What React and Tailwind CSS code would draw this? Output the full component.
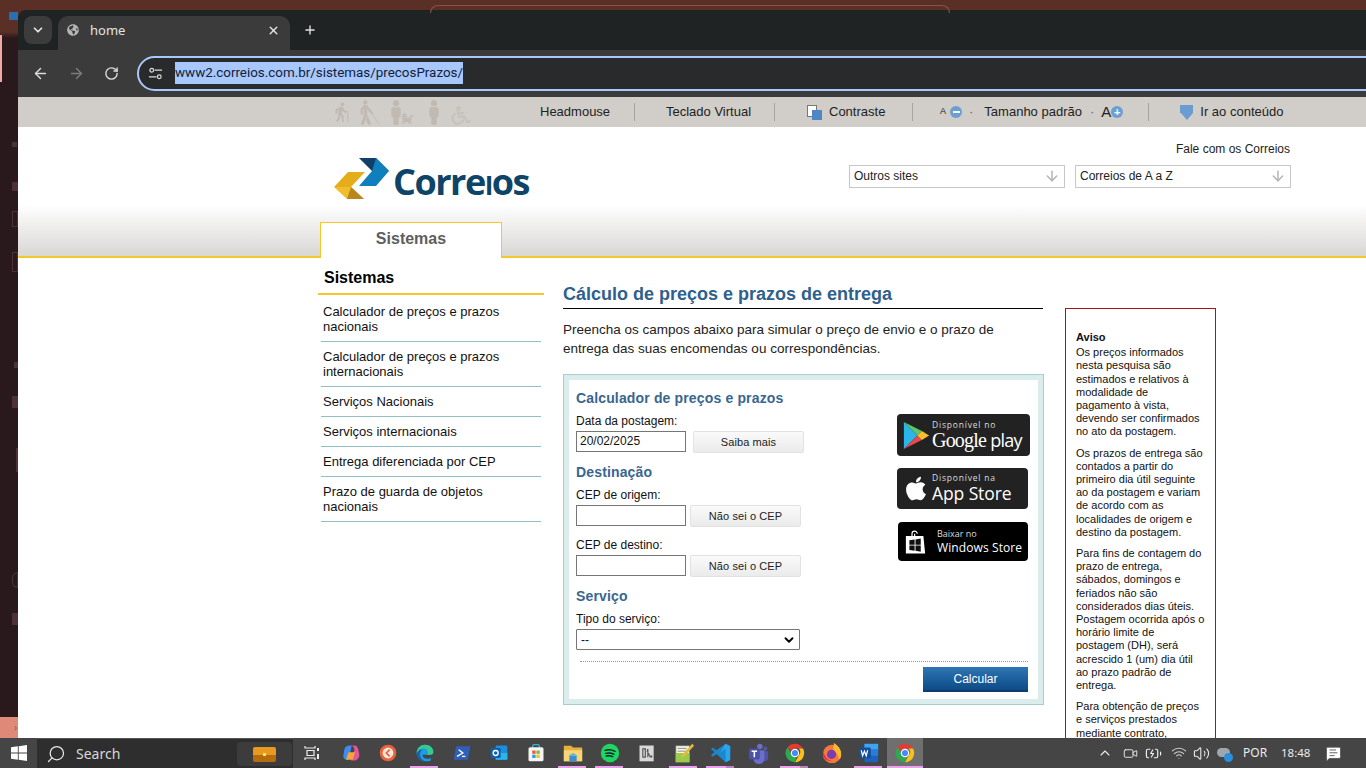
import React from "react";
import { FaApple, FaBlind, FaWheelchair, FaMale, FaBabyCarriage, FaGlobeAmericas } from "react-icons/fa";
import { MdElderly } from "react-icons/md";
import { ChevronDown, X, Plus, ArrowLeft, ArrowRight, RotateCw, Search, ChevronUp, Volume2, Wifi, MessageSquareText, Video, BatteryCharging, ArrowDown } from "lucide-react";

const Chrome = () => (
  <svg viewBox="0 0 24 24" className="w-[20px] h-[20px]">
    <path d="M12 1a11 11 0 0 1 9.6 5.6H12a5.4 5.4 0 0 0-5 3.4L3.2 5A11 11 0 0 1 12 1z" fill="#e33b2e" />
    <path d="M21.6 6.6A11 11 0 0 1 12 23l4.7-8.2a5.4 5.4 0 0 0-.4-8.2z" fill="#fbc116" />
    <path d="M12 23A11 11 0 0 1 3.2 5L8 13.6a5.4 5.4 0 0 0 6 3.6z" fill="#2da94f" />
    <circle cx="12" cy="12" r="4.4" fill="#4a8af4" stroke="#fff" strokeWidth="1.4" />
  </svg>
);

const apps = [
  { k: "copilot", u: 0, i: (
    <svg viewBox="0 0 24 24" className="w-[20px] h-[20px]">
      <path d="M4 8c1-4 4-5 7-5h2L9 20H7c-3 0-5-3-4-6z" fill="#3f8cf0" />
      <path d="M13 3h3c3 0 4 2 5 6l1 5c0 4-3 7-6 7h-4l4-12c.5-2-1-5-3-6z" fill="#e2569c" />
      <path d="M9 11h8l-3 9H6z" fill="#f5a53c" />
    </svg>) },
  { k: "clock", i: (
    <svg viewBox="0 0 24 24" className="w-[20px] h-[20px]">
      <circle cx="12" cy="12" r="10" fill="#e8623c" />
      <circle cx="12" cy="12" r="6.5" fill="#f7e6dc" />
      <path d="M14 8l-4 4 4 4" stroke="#e8623c" strokeWidth="2" fill="none" />
    </svg>) },
  { k: "edge", u: 1, i: (
    <svg viewBox="0 0 24 24" className="w-[20px] h-[20px]">
      <path d="M2 12C2 6 7 2 12 2c6 0 10 4 10 9 0 2-2 3-4 3H9c0 3 3 5 6 5 2 0 3-.4 4-1v3c-2 1-4 1-6 1C7 22 2 18 2 12z" fill="#1b9de2" />
      <path d="M2 12c1-3 4-5 7-4-2 1-3 3-3 6 0 3 2 6 6 8C6 22 2 18 2 12z" fill="#1e5fb0" />
      <path d="M12 2c6 0 10 4 10 9 0 2-2 3-4 3h-4c2-1 2-3 1-5-1-2-4-3-6-2-3 0-5 2-7 5 0-6 5-10 10-10z" fill="#37c98f" />
    </svg>) },
  { k: "ps", i: (
    <svg viewBox="0 0 24 24" className="w-[20px] h-[20px]">
      <path d="M5 4h17l-3 16H2z" fill="#2f5fb8" />
      <path d="M8 8l5 4-7 4M12 16h4" stroke="#fff" strokeWidth="1.6" fill="none" />
    </svg>) },
  { k: "outlook", i: (
    <svg viewBox="0 0 24 24" className="w-[20px] h-[20px]">
      <rect x="8" y="3" width="14" height="17" rx="1.5" fill="#1c8fdc" />
      <path d="M8 12h14v8H8z" fill="#2cb5ea" />
      <rect x="2" y="6" width="12" height="12" rx="1.5" fill="#0f5fae" />
      <circle cx="8" cy="12" r="3" fill="none" stroke="#fff" strokeWidth="1.6" />
    </svg>) },
  { k: "store", i: (
    <svg viewBox="0 0 24 24" className="w-[20px] h-[20px]">
      <path d="M8 6V4a2 2 0 0 1 2-2h4a2 2 0 0 1 2 2v2" stroke="#35b7d5" strokeWidth="1.6" fill="none" />
      <rect x="3" y="5" width="18" height="17" rx="2" fill="#f4f4f4" />
      <rect x="7.5" y="9" width="4" height="4" fill="#ef5b3a" />
      <rect x="12.5" y="9" width="4" height="4" fill="#7bbc3a" />
      <rect x="7.5" y="14" width="4" height="4" fill="#2a9fe0" />
      <rect x="12.5" y="14" width="4" height="4" fill="#f8b92b" />
    </svg>) },
  { k: "folder", u: 1, i: (
    <svg viewBox="0 0 24 24" className="w-[22px] h-[22px]">
      <path d="M2 4h8l2 2h10v15H2z" fill="#e6b13c" />
      <path d="M2 9h20v12H2z" fill="#f8d675" />
      <path d="M8 21v-6h8v6z" fill="#3b8fd4" />
      <path d="M7 15l5-3 5 3z" fill="#5eaee6" />
    </svg>) },
  { k: "spotify", u: 1, i: (
    <svg viewBox="0 0 24 24" className="w-[20px] h-[20px]">
      <circle cx="12" cy="12" r="11" fill="#1ed760" />
      <path d="M6 8.8c4-1 8.5-.7 12 1.2M6.8 12.4c3.5-.8 7-.5 10 1.1M7.5 15.6c3-.6 5.6-.4 8 .9" stroke="#123" strokeWidth="1.7" fill="none" strokeLinecap="round" />
    </svg>) },
  { k: "notion", i: (
    <svg viewBox="0 0 24 24" className="w-[20px] h-[20px]">
      <rect x="3" y="3" width="17" height="19" fill="#d8d8d8" />
      <path d="M7 7h3v10H7zM12 9l4 8M12 8h1v9" stroke="#555" strokeWidth="1.4" fill="none" />
      <rect x="16" y="15" width="2.4" height="2.4" fill="#555" />
    </svg>) },
  { k: "notepad", u: 1, i: (
    <svg viewBox="0 0 24 24" className="w-[22px] h-[22px]">
      <path d="M3 4h15v18H3z" fill="#f6f6e2" stroke="#666" strokeWidth=".8" />
      <path d="M3 12h15v10H3z" fill="#9ccb4a" />
      <path d="M5 7h10M5 10h10" stroke="#888" strokeWidth="1" />
      <path d="M21 2l2 2-11 12-3 1 1-3z" fill="#e5b93c" />
    </svg>) },
  { k: "vscode", u: 2, i: (
    <svg viewBox="0 0 24 24" className="w-[22px] h-[22px]">
      <path d="M17 2l5 2.5v15L17 22 7 13l-4 3-2-1.500 4-3.500-4-3.500L3 6l4 3z" fill="#1a87cf" />
      <path d="M17 2l5 2.500v15L17 22V7l-6 5z" fill="#2aa7ec" />
    </svg>) },
  { k: "teams", i: (
    <svg viewBox="0 0 24 24" className="w-[22px] h-[22px]">
      <circle cx="14" cy="5" r="3" fill="#6b6fc9" />
      <circle cx="20" cy="7" r="2.200" fill="#5059a8" />
      <path d="M15 10h8v7a4 4 0 0 1-8 0z" fill="#4f55a6" />
      <path d="M7 9h12v9a6 6 0 0 1-12 0z" fill="#6b6fc9" />
      <rect x="2" y="7" width="12" height="12" rx="1.500" fill="#4b50a8" />
      <path d="M5 10h6M8 10v6.500" stroke="#fff" strokeWidth="1.700" />
    </svg>) },
  { k: "chrome", u: 2, i: <Chrome /> },
  { k: "firefox", i: (
    <svg viewBox="0 0 24 24" className="w-[22px] h-[22px]">
      <circle cx="12" cy="13" r="10" fill="#f5793a" />
      <path d="M14 1c5 3 8 7 8 12 0 3-1 5-2 6-1-5-4-8-7-11 1-3 1-5 1-7z" fill="#fbb92e" />
      <circle cx="11.500" cy="13.500" r="5" fill="#7c3bb0" />
      <path d="M3 11c1 6 5 9 9 10-5 0-10-3-10-8z" fill="#e8304a" />
    </svg>) },
  { k: "word", u: 1, i: (
    <svg viewBox="0 0 24 24" className="w-[22px] h-[22px]">
      <rect x="7" y="2" width="15" height="20" rx="1.500" fill="#1f62bd" />
      <rect x="7" y="8" width="15" height="7" fill="#2b7cd3" />
      <rect x="7" y="2" width="15" height="6" fill="#41a5ee" />
      <rect x="1" y="6" width="13" height="12" rx="1.500" fill="#134f9c" />
      <path d="M3.500 9l1.500 6 2-5 2 5 1.500-6" stroke="#fff" strokeWidth="1.300" fill="none" />
    </svg>) },
];

const GooglePlayMark = () => (
  <svg viewBox="0 0 30 32" className="w-[27px] h-[29px] shrink-0">
    <path d="M1 1l15 15L1 31z" fill="#2bb5e8" />
    <path d="M1 1l20 10-5 5z" fill="#5cc66b" />
    <path d="M1 31l20-10-5-5z" fill="#e8484e" />
    <path d="M21 11l8 5-8 5-5-5z" fill="#f5c02c" />
  </svg>
);

const WinStoreMark = () => (
  <svg viewBox="0 0 24 28" className="w-[21px] h-[26px] shrink-0">
    <path d="M8 7V4.500a3 3 0 0 1 6 0M11 4.500V7" stroke="#fff" strokeWidth="1.300" fill="none" />
    <path d="M1 7h20l2 20H1z" fill="#fff" />
    <path d="M5 12l6-1v6H5zM12 11l6-1v7h-6zM5 18h6v6l-6-1zM12 18h6v7l-6-1z" fill="#111" />
  </svg>
);

function GrayBar() {
  const Sep = () => <span className="block w-px h-[18px] bg-[#a8a49f]" />;
  return (
    <div className="h-[30px] bg-[#d1cdc9] flex items-center pl-[312px] text-[13px] text-[#222] shrink-0 font-['Liberation_Sans',sans-serif]">
      <div className="flex items-end text-[#c0bab3] w-[210px] h-[26px]">
        <MdElderly className="w-[22px] h-[26px]" />
        <FaBlind className="w-[20px] h-[25px] ml-[8px]" />
        <FaMale className="w-[14px] h-[25px] ml-[9px]" />
        <FaBabyCarriage className="w-[11px] h-[13px] -ml-[1px]" />
        <FaMale className="w-[16px] h-[25px] ml-[13px]" />
        <FaWheelchair className="w-[20px] h-[19px] ml-[9px] text-[#c8c2bb]" />
      </div>
      <span className="w-[94px]">Headmouse</span>
      <Sep />
      <span className="ml-[31px] w-[108px]">Teclado Virtual</span>
      <Sep />
      <span className="ml-[32px] w-[15px] h-[15px] relative shrink-0">
        <span className="absolute left-0 top-0 w-[10px] h-[12px] bg-white border border-[#777]" />
        <span className="absolute right-0 bottom-0 w-[10px] h-[10px] bg-[#4f86c6]" />
      </span>
      <span className="ml-[7px] w-[83px]">Contraste</span>
      <Sep />
      <span className="ml-[27px] text-[9px]">A</span>
      <span className="ml-[4px] w-[12px] h-[12px] rounded-full bg-[#6b9fd4] flex items-center justify-center"><span className="w-[7px] h-[2px] bg-white" /></span>
      <span className="ml-[7px] text-[#666]">·</span>
      <span className="ml-[11px]">Tamanho padrão</span>
      <span className="ml-[8px] text-[#666]">·</span>
      <span className="ml-[7px] text-[15px]">A</span>
      <span className="w-[12px] h-[12px] rounded-full bg-[#6b9fd4] flex items-center justify-center text-white text-[11px] font-bold leading-none">+</span>
      <span className="ml-[25px]"><Sep /></span>
      <span className="ml-[31px] w-[13px] h-[15px] flex flex-col items-center shrink-0">
        <span className="w-[13px] h-[8px] bg-[#6a9bd1]" />
        <span className="w-0 h-0 border-l-[6.5px] border-r-[6.5px] border-t-[7px] border-l-transparent border-r-transparent border-t-[#6a9bd1]" />
      </span>
      <span className="ml-[7px]">Ir ao conteúdo</span>
    </div>
  );
}

function Logo() {
  return (
    <div className="flex items-center ml-[14px] mt-[30px] h-[43px]">
      <svg viewBox="0 0 56 42" className="w-[56px] h-[42px] shrink-0">
        <path d="M0 29L14 14H31L17 29z" fill="#e6ad1a" />
        <path d="M0 29L17 29L30 41H13z" fill="#f0bd2c" />
        <path d="M17 29L30 41H13z" fill="#b8851e" />
        <path d="M25 0H42L55 13L38 13z" fill="#123f68" />
        <path d="M42 0L55 13L42 28H25L38 13z" fill="#0f7fbe" />
      </svg>
      <span className="ml-[3px] mt-[7px] font-['Open_Sans',sans-serif] text-[36px] leading-none font-bold text-[#0d4468] tracking-[-1.5px]">
        Corre<span className="uppercase text-[26px] font-bold">i</span>os
      </span>
    </div>
  );
}

function Dropdown({ label }) {
  return (
    <div className="w-[216px] h-[23px] border border-[#c6c6c6] bg-white flex items-center justify-between pl-[4px] pr-[4px] pb-[1px] text-[12px] text-[#222]">
      <span>{label}</span>
      <ArrowDown className="w-[16px] h-[16px] text-[#b3b3b3]" strokeWidth={2.2} />
    </div>
  );
}

function Header() {
  return (
    <div className="h-[131px] shrink-0 border-b-2 border-[#f4c82c] bg-[linear-gradient(#ffffff_0,#ffffff_60%,#d9d7d4_100%)] pl-[302px] pr-[75px] flex flex-col">
      <div className="flex h-[95px] shrink-0">
        <Logo />
        <div className="ml-auto flex flex-col items-end pt-[14px] text-[12px] text-[#222]">
          <span className="leading-[16px] mr-px">Fale com os Correios</span>
          <div className="flex gap-[10px] mt-[8px]">
            <Dropdown label="Outros sites" />
            <Dropdown label="Correios de A a Z" />
          </div>
        </div>
      </div>
      <div className="w-[182px] h-[36px] shrink-0 bg-white border border-b-0 border-[#f4c82c] flex items-center justify-center text-[16px] font-bold text-[#5e5e5e] pb-[4px]">
        Sistemas
      </div>
    </div>
  );
}

const menu = [
  ["Calculador de preços e prazos nacionais", 45],
  ["Calculador de preços e prazos internacionais", 45],
  ["Serviços Nacionais", 30],
  ["Serviços internacionais", 30],
  ["Entrega diferenciada por CEP", 30],
  ["Prazo de guarda de objetos nacionais", 45],
];

function Sidebar() {
  return (
    <div className="w-[226px] shrink-0 pt-[10px] ml-[-2px]">
      <div className="text-[16px] font-bold text-black leading-[20px] pl-[6px] pb-[5px] border-b-2 border-[#f4c82c]">Sistemas</div>
      <div className="ml-[3px] w-[220px] mt-[2px]">
        {menu.map(([t, h]) => (
          <div key={t} className="border-b border-[#8fc0c4] flex items-center pl-[2px] pr-[30px] text-[13px] leading-[15px] text-[#111]" style={{ height: h }}>
            <span>{t}</span>
          </div>
        ))}
      </div>
    </div>
  );
}

const Btn = ({ children, w }) => (
  <button className={`${w} h-[22px] rounded-[2px] border border-[#e2e2e2] bg-[linear-gradient(#fafafa,#ebebeb)] text-[11px] tracking-[0.1px] text-[#222] flex items-center justify-center`}>{children}</button>
);

const H3 = ({ children, className = "" }) => (
  <div className={`text-[14px] font-bold tracking-[0.15px] text-[#3a6590] leading-[18px] ${className}`}>{children}</div>
);

const Lbl = ({ children, className = "" }) => (
  <div className={`text-[12px] text-[#111] leading-[14px] ${className}`}>{children}</div>
);

const Inp = ({ value = "" }) => (
  <div className="w-[110px] h-[21px] border border-[#767676] bg-white text-[12px] text-[#111] pl-[3px] leading-[18px]">{value}</div>
);

function Badges() {
  return (
    <div className="flex flex-col w-[135px] ml-auto mt-[25px] mr-[-3px] text-white font-['Open_Sans',sans-serif]">
      <div className="w-[133px] h-[42px] ml-[1px] bg-[#222] rounded-[4px] flex items-center pl-[6px]">
        <GooglePlayMark />
        <div className="ml-[2px] flex flex-col leading-none">
          <span className="text-[8.5px] tracking-[0.8px] leading-[10px] text-[#ddd]">Disponível no</span>
          <span className="text-[20px] leading-[20px] tracking-[-0.8px] font-['Liberation_Serif',serif] whitespace-nowrap">Google <span className="font-['Open_Sans',sans-serif] text-[18px]">play</span></span>
        </div>
      </div>
      <div className="w-[131px] h-[41px] ml-[1px] mt-[12px] bg-[#222] rounded-[4px] flex items-center pl-[7px]">
        <FaApple className="w-[24px] h-[27px] shrink-0" />
        <div className="ml-[4px] flex flex-col">
          <span className="text-[8.5px] tracking-[0.8px] leading-[10px] text-[#ddd]">Disponível na</span>
          <span className="text-[17.5px] leading-[21px] tracking-[-0.1px]">App Store</span>
        </div>
      </div>
      <div className="w-[130px] h-[39px] ml-[2px] mt-[13px] bg-black rounded-[4px] flex items-center pl-[7px]">
        <WinStoreMark />
        <div className="ml-[11px] flex flex-col">
          <span className="text-[9px] leading-[12px] text-[#ddd]">Baixar no</span>
          <span className="text-[12px] leading-[15px] tracking-[0.1px]">Windows Store</span>
        </div>
      </div>
    </div>
  );
}

function Calc() {
  return (
    <div className="mt-[16px] w-[481px] h-[331px] border border-[#a9cccc] bg-[#dbecec] p-[5px]">
      <div className="bg-white h-full pl-[7px] pr-[10px] pt-[9px]">
        <div className="flex">
          <div className="w-[228px] shrink-0">
            <H3>Calculador de preços e prazos</H3>
            <Lbl className="mt-[7px]">Data da postagem:</Lbl>
            <div className="flex gap-[7px] mt-[3px]">
              <Inp value="20/02/2025" />
              <Btn w="w-[111px]">Saiba mais</Btn>
            </div>
            <H3 className="mt-[10px]">Destinação</H3>
            <Lbl className="mt-[7px]">CEP de origem:</Lbl>
            <div className="flex gap-[4px] mt-[3px]">
              <Inp />
              <Btn w="w-[111px]">Não sei o CEP</Btn>
            </div>
            <Lbl className="mt-[11px]">CEP de destino:</Lbl>
            <div className="flex gap-[4px] mt-[3px]">
              <Inp />
              <Btn w="w-[111px]">Não sei o CEP</Btn>
            </div>
            <H3 className="mt-[10px]">Serviço</H3>
            <Lbl className="mt-[7px]">Tipo do serviço:</Lbl>
            <div className="w-[224px] h-[21px] mt-[3px] border border-[#767676] rounded-[1px] bg-white flex items-center justify-between pl-[4px] pr-[3px] text-[12px] text-[#111]">
              <span>--</span>
              <ChevronDown className="w-[14px] h-[14px] text-black" strokeWidth={3.2} />
            </div>
          </div>
          <Badges />
        </div>
        <div className="border-t border-dotted border-[#999] mt-[11px] ml-[4px]" />
        <div className="flex justify-end mt-[5px]">
          <div className="w-[105px] h-[25px] bg-[linear-gradient(#2f75b5,#0c4c86)] text-white text-[12px] flex items-center justify-center border-b-2 border-[#0b3f6f]">Calcular</div>
        </div>
      </div>
    </div>
  );
}

function MainCol() {
  return (
    <div className="w-[481px] shrink-0 ml-[19px] pt-[25px]">
      <h1 className="text-[18px] font-bold text-[#2f5f8d] leading-[22px] pb-[3px] border-b border-black w-[480px]">Cálculo de preços e prazos de entrega</h1>
      <p className="mt-[11px] text-[13.5px] leading-[19px] text-[#222] w-[450px]">Preencha os campos abaixo para simular o preço de envio e o prazo de entrega das suas encomendas ou correspondências.</p>
      <Calc />
    </div>
  );
}

function Aviso() {
  return (
    <div className="ml-[21px] mt-[50px] w-[151px] h-[500px] shrink-0 border border-[#a8121c] pl-[10px] pr-[9.5px] pt-[22px] text-[11px] leading-[13.2px] text-[#111]">
      <div className="font-bold mb-[2px]">Aviso</div>
      <p>Os preços informados nesta pesquisa são estimados e relativos à modalidade de pagamento à vista, devendo ser confirmados no ato da postagem.</p>
      <p className="mt-[8px]">Os prazos de entrega são contados a partir do primeiro dia útil seguinte ao da postagem e variam de acordo com as localidades de origem e destino da postagem.</p>
      <p className="mt-[8px]">Para fins de contagem do prazo de entrega, sábados, domingos e feriados não são considerados dias úteis. Postagem ocorrida após o horário limite de postagem (DH), será acrescido 1 (um) dia útil ao prazo padrão de entrega.</p>
      <p className="mt-[8px]">Para obtenção de preços e serviços prestados mediante contrato,</p>
    </div>
  );
}

function Browser() {
  return (
    <div className="flex-1 min-w-0 flex flex-col mt-[10px] overflow-hidden font-['Liberation_Sans',sans-serif]">
      <div className="h-[40px] bg-[#202324] flex shrink-0 pt-[6px] pl-[6px] rounded-tl-[8px]">
        <div className="w-[28px] h-[28px] rounded-[8px] bg-[#3c3c3c] flex items-center justify-center text-[#e6e6e6]">
          <ChevronDown className="w-[14px] h-[14px]" strokeWidth={3} />
        </div>
        <div className="ml-[6px] w-[232px] h-[34px] bg-[#3b3b3b] rounded-t-[10px] flex items-center pl-[9px] pr-[10px] pb-[5px] text-[#e3e3e3]">
          <FaGlobeAmericas className="w-[12px] h-[12px] text-[#b5b5b5] mb-[2px]" />
          <span className="ml-[11px] text-[13px] font-['Noto_Sans',sans-serif]">home</span>
          <X className="ml-auto w-[13px] h-[13px]" strokeWidth={2.6} />
        </div>
        <Plus className="ml-[13px] mt-[7px] w-[14px] h-[14px] text-[#dedede]" strokeWidth={2.4} />
      </div>
      <div className="h-[47px] bg-[#3b3b3b] flex items-center shrink-0 pl-[14px] relative">
        <ArrowLeft className="w-[17px] h-[17px] text-[#dcdcdc]" strokeWidth={2} />
        <ArrowRight className="ml-[19px] w-[17px] h-[17px] text-[#7c7c7c]" strokeWidth={2} />
        <RotateCw className="ml-[19px] w-[15px] h-[15px] text-[#dcdcdc]" strokeWidth={2.2} />
        <div className="ml-[18px] mb-[1px] h-[35px] flex-1 mr-[-30px] rounded-full border-2 border-[#a8c7fa] bg-[#292a2b] flex items-center pl-[9px]">
          <svg viewBox="0 0 16 16" className="w-[15px] h-[15px] text-[#dcdcdc]" fill="none" stroke="currentColor" strokeWidth="1.300">
            <circle cx="4" cy="4.500" r="2" />
            <path d="M7 4.500h8M1 11.500h8" />
            <circle cx="12" cy="11.500" r="2" />
          </svg>
          <span className="ml-[12px] bg-[#a8c7fa] text-[#10213a] text-[13.4px] leading-[22px] font-['Roboto',sans-serif] whitespace-nowrap">www2.correios.com.br/sistemas/precosPrazos/</span>
        </div>
      </div>
      <div className="flex-1 min-h-0 bg-white flex flex-col overflow-hidden">
        <GrayBar />
        <Header />
        <div className="flex pl-[302px]">
          <Sidebar />
          <MainCol />
          <Aviso />
        </div>
      </div>
    </div>
  );
}

function Taskbar() {
  return (
    <div className="h-[30px] bg-[#454545] flex items-stretch shrink-0 text-[#eee] relative font-['Noto_Sans',sans-serif]">
      <div className="w-[37px] flex items-center justify-center">
        <svg viewBox="0 0 16 16" className="w-[16px] h-[16px]" fill="#fff">
          <path d="M0 2.300L6.800 1.300V7.600H0zM7.700 1.200L16 0V7.600H7.700zM0 8.500H6.800V14.800L0 13.800zM7.700 8.500H16V16L7.700 14.800z" />
        </svg>
      </div>
      <div className="w-[256px] bg-[#2e2e2e] border-t border-[#555] flex items-center pl-[9px] relative">
        <Search className="w-[20px] h-[20px] -scale-x-100 text-[#eaeaea]" strokeWidth={1.5} />
        <span className="ml-[10px] text-[14px] text-[#d8d8d8]">Search</span>
        <div className="absolute right-px top-[3px] w-[55px] h-[24px] rounded-[4px] bg-[#3c3c3c] flex items-center justify-center">
          <span className="w-[23px] h-[15px] rounded-[2px] bg-[linear-gradient(#e89a20_50%,#b56c10_50%)] flex items-center justify-center"><span className="w-[3px] h-[3px] bg-[#ffe36a]" /></span>
        </div>
      </div>
      <div className="w-[37px] mr-[2px] flex items-center justify-center">
        <svg viewBox="0 0 16 16" className="w-[16px] h-[16px]" stroke="#eee" fill="none" strokeWidth="1.200">
          <path d="M1 1v2h10V1M3 5.500h7v5H3zM1 15v-2h10v2" />
          <rect x="13" y="3" width="2" height="3" fill="#eee" stroke="none" />
          <rect x="13" y="9" width="2" height="5" fill="#eee" stroke="none" />
        </svg>
      </div>
      {apps.map((a) => (
        <div key={a.k} className="w-[37px] flex items-center justify-center relative">
          {a.i}
          {a.u === 1 && <span className="absolute bottom-0 left-[4px] w-[28px] h-[2px] bg-[#e9a3ea]" />}
          {a.u === 2 && <span className="absolute bottom-0 left-[4px] w-[28px] h-[2px] bg-[#e9a3ea]"><span className="absolute right-0 w-[8px] h-[2px] bg-[#b985b8]" /></span>}
        </div>
      ))}
      <div className="w-[36px] bg-[#6f6f6f] flex items-center justify-center relative">
        <Chrome />
        <span className="absolute bottom-0 left-0 right-0 h-[2px] bg-[#e9a3ea]" />
      </div>
      <div className="ml-auto flex items-center text-[#ececec]">
        <ChevronUp className="w-[16px] h-[16px]" strokeWidth={1.600} />
        <Video className="ml-[10px] w-[15px] h-[15px]" strokeWidth={1.500} />
        <BatteryCharging className="ml-[7px] w-[17px] h-[17px]" strokeWidth={1.700} />
        <Wifi className="ml-[9px] w-[16px] h-[16px] text-[#cfcfcf]" strokeWidth={1.600} />
        <Volume2 className="ml-[6px] w-[17px] h-[17px]" strokeWidth={1.500} />
        <span className="ml-[7px] w-[16px] h-[13px] relative">
          <span className="absolute left-0 top-[1px] w-[13px] h-[9px] rounded-full bg-[#9fa6ad]" />
          <span className="absolute right-0 bottom-[-2px] w-[9px] h-[9px] rounded-full bg-[#2b8fe0]" />
        </span>
        <span className="ml-[10px] text-[12px] w-[24px]">POR</span>
        <span className="ml-[14px] text-[11.5px] w-[28px]">18:48</span>
        <MessageSquareText className="ml-[16px] mr-[24px] w-[17px] h-[17px] text-white fill-white stroke-[#555]" strokeWidth={1.300} />
      </div>
    </div>
  );
}

export default function App() {
  return (
    <div className="w-[1366px] h-[768px] overflow-hidden flex flex-col bg-[#5a2f26] relative">
      <div className="absolute left-[430px] top-[5px] w-[520px] h-[8px] rounded-t-[8px] border border-b-0 border-[#84564b]" />
      <div className="flex-1 min-h-0 flex">
        <div className="w-[18px] shrink-0 flex flex-col items-start bg-[linear-gradient(#5a2f26_0,#5a2f26_32px,#2a191c_38px,#2a191c_100%)]">
          <span className="mt-[12px] ml-[9px] w-[9px] h-[8px] bg-[#2a6fb0]" />
          <span className="mt-[15px] w-[2px] h-[47px] bg-[#f3a8a8]" />
          <span className="mt-[60px] ml-[12px] w-[5px] h-[5px] bg-[#4a3236]" />
          <span className="mt-[35px] ml-[12px] w-[6px] h-[9px] bg-[#4a3236]" />
          <span className="mt-[20px] ml-[12px] w-[6px] h-[16px] border border-[#4a3236]" />
          <span className="mt-[25px] ml-[12px] w-[6px] h-[20px] border border-[#4a3236]" />
          <span className="mt-[90px] ml-[14px] w-[4px] h-[6px] bg-[#4a3236]" />
          <span className="mt-[28px] ml-[12px] w-[6px] h-[12px] bg-[#4a3236]" />
          <span className="mt-[40px] ml-[16px] w-[2px] h-[24px] bg-[#4a3236]" />
          <span className="mt-[100px] ml-[12px] w-[6px] h-[16px] border border-[#4a3236] rounded-l-full" />
          <span className="mt-[25px] ml-[12px] w-[6px] h-[12px] bg-[#4a3236]" />
          <div className="flex-1" />
          <div className="h-[21px] w-full bg-[#df8a78] flex items-center justify-end text-[#a05a4e] text-[10px] pr-[1px]">›</div>
        </div>
        <Browser />
      </div>
      <Taskbar />
    </div>
  );
}
